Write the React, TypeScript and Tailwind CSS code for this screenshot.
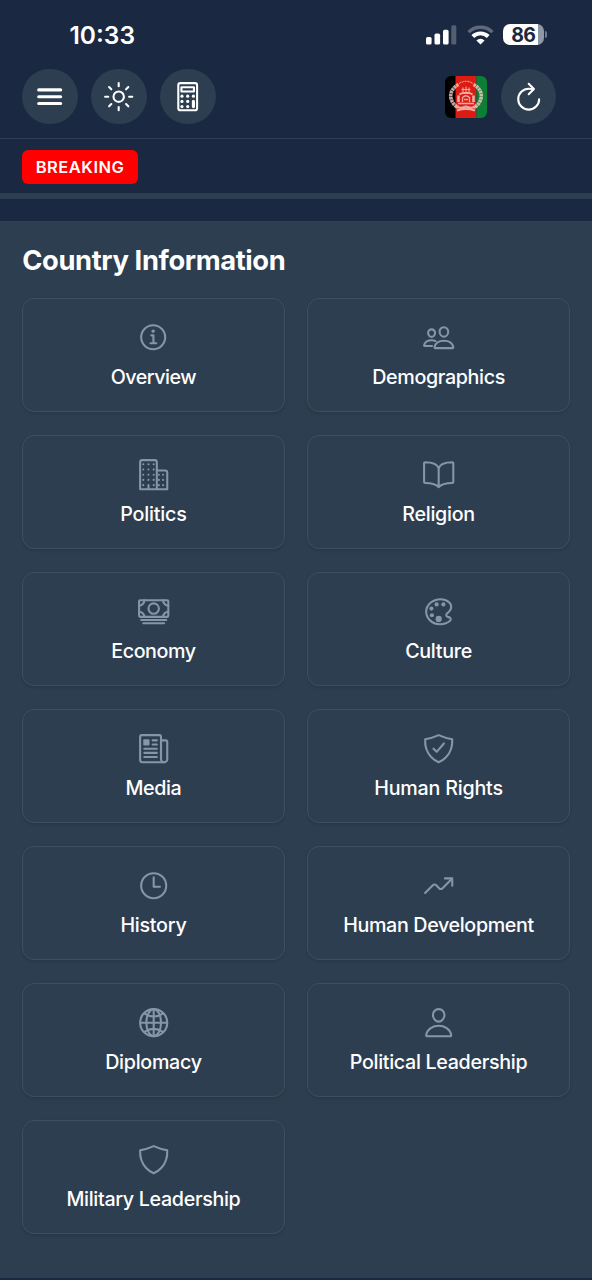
import type { ReactNode } from "react";
import type { IconType } from "react-icons";
import {
  IoBookOutline,
  IoBusinessOutline,
  IoCalculatorOutline,
  IoCashOutline,
  IoColorPaletteOutline,
  IoGlobeOutline,
  IoInformationCircleOutline,
  IoMenu,
  IoNewspaperOutline,
  IoPeopleOutline,
  IoPersonOutline,
  IoRefreshOutline,
  IoShieldCheckmarkOutline,
  IoShieldOutline,
  IoSunnyOutline,
  IoTimeOutline,
  IoTrendingUpOutline,
} from "react-icons/io5";

type Section = { label: string; icon: IconType; tracking: string };

const SECTIONS: Section[] = [
  { label: "Overview", icon: IoInformationCircleOutline, tracking: "tracking-[-0.5px]" },
  { label: "Demographics", icon: IoPeopleOutline, tracking: "tracking-[-0.36px]" },
  { label: "Politics", icon: IoBusinessOutline, tracking: "tracking-[-0.2px]" },
  { label: "Religion", icon: IoBookOutline, tracking: "tracking-[-0.28px]" },
  { label: "Economy", icon: IoCashOutline, tracking: "tracking-[-0.45px]" },
  { label: "Culture", icon: IoColorPaletteOutline, tracking: "tracking-[-0.3px]" },
  { label: "Media", icon: IoNewspaperOutline, tracking: "tracking-[-0.4px]" },
  { label: "Human Rights", icon: IoShieldCheckmarkOutline, tracking: "tracking-[-0.22px]" },
  { label: "History", icon: IoTimeOutline, tracking: "tracking-[-0.25px]" },
  { label: "Human Development", icon: IoTrendingUpOutline, tracking: "tracking-[-0.36px]" },
  { label: "Diplomacy", icon: IoGlobeOutline, tracking: "tracking-[-0.3px]" },
  { label: "Political Leadership", icon: IoPersonOutline, tracking: "tracking-[-0.32px]" },
  { label: "Military Leadership", icon: IoShieldOutline, tracking: "tracking-[-0.33px]" },
];

function StatusBar() {
  return (
    <div className="flex h-[69px] items-center justify-between pr-[45px] pl-[69.5px]">
      <span className="pt-px text-[24.5px] leading-none font-semibold">10:33</span>
      <div className="flex items-center">
        <svg width="31" height="20" viewBox="0 0 31 20" fill="white">
          <rect x="0" y="12" width="5.6" height="7.6" rx="1.6" />
          <rect x="8.5" y="8.6" width="5.6" height="11" rx="1.6" />
          <rect x="17" y="4.8" width="5.6" height="14.8" rx="1.6" />
          <rect x="25.3" y="0.3" width="5" height="19.3" rx="1.6" opacity="0.25" />
        </svg>
        <svg
          className="ml-[9.5px]"
          width="27"
          height="20"
          viewBox="0 0 27 20"
          fill="none"
          stroke="white"
        >
          <path d="M1.6 7.1a17 17 0 0 1 23.8 0" strokeWidth="3.4" opacity="0.3" />
          <path d="M5.8 11.5a11 11 0 0 1 15.4 0" strokeWidth="3.9" />
          <path d="M13.5 19.6l-4.1-4.2a5.9 5.9 0 0 1 8.2 0z" fill="white" stroke="none" />
        </svg>
        <div className="ml-[9.5px] flex h-[21px] w-[40.5px] items-center justify-center rounded-[7px] bg-[linear-gradient(90deg,#fff_86%,#8f98a5_86%)] pt-[1.5px] text-[19.5px] leading-none font-bold tracking-[-0.7px] text-[#1a2940]">
          86
        </div>
        <span className="ml-px h-[7px] w-[2.5px] rounded-r-full bg-[#717b8b]" />
      </div>
    </div>
  );
}

function RoundButton({ children, label }: { children: ReactNode; label: string }) {
  return (
    <button
      type="button"
      aria-label={label}
      className="flex size-[55.4px] items-center justify-center rounded-full bg-[#2d3e50]"
    >
      {children}
    </button>
  );
}

function AfghanistanFlag() {
  return (
    <svg className="size-[42px] rounded-[6px]" viewBox="0 0 42 42">
      <rect width="10.6" height="42" fill="#000" />
      <rect x="10.6" width="20.8" height="42" fill="#dc1c13" />
      <rect x="31.4" width="10.6" height="42" fill="#0d7f36" />
      <g fill="none" stroke="#f3cfc8" opacity="0.8">
        <path d="M13.5 8.5C3.5 13.5 3 25.5 13 31.5" strokeWidth="3.6" strokeDasharray="2.6 0.5" />
        <path d="M28.5 8.5C38.5 13.5 39 25.5 29 31.5" strokeWidth="3.6" strokeDasharray="2.6 0.5" />
        <path d="M14 7.5q7-4.5 14 0" strokeWidth="1.2" strokeDasharray="1 0.6" />
        <path d="M11 30.5q5 2.5 10 0q5 2.5 10 0M12 34.5q9-3 18 0" strokeWidth="2" />
        <path d="M13 27.5h16" strokeWidth="1.6" />
        <path d="M13.5 26v-6.5M28.5 26v-6.5" strokeWidth="2.6" />
        <path d="M14.5 18.5q2-1.5 4-1.5h5q2 0 4 1.5" strokeWidth="1.8" />
        <path d="M17.5 26v-4.5q3.5-3.5 7 0v4.5M19 23.5h4" strokeWidth="1.3" />
        <path d="M16.5 13.5h9M18 16.5v-5M21 16.5v-6M24 16.5v-5" strokeWidth="1.1" />
      </g>
    </svg>
  );
}

function TopBar() {
  return (
    <header className="flex h-[70px] items-start justify-between border-b border-[#2d3e50] pr-[36px] pl-[22.3px]">
      <div className="flex gap-[13.7px]">
        <RoundButton label="Menu">
          <IoMenu className="size-[33.4px]" />
        </RoundButton>
        <RoundButton label="Toggle theme">
          <IoSunnyOutline className="size-[33.4px]" />
        </RoundButton>
        <RoundButton label="Calculator">
          <IoCalculatorOutline className="size-[33.4px]" />
        </RoundButton>
      </div>
      <div className="flex items-center gap-[13.7px]">
        <AfghanistanFlag />
        <RoundButton label="Refresh">
          <IoRefreshOutline className="size-[33.4px]" />
        </RoundButton>
      </div>
    </header>
  );
}

function BreakingBar() {
  return (
    <div className="flex h-[60px] items-start border-b-[6px] border-[#2d3e50] pt-[11px] pl-[22px]">
      <span className="flex h-[34px] w-[116px] items-center justify-center rounded-[6px] bg-[#ff0000] pt-px text-[16.5px] leading-none font-semibold tracking-[0.5px]">
        BREAKING
      </span>
    </div>
  );
}

function SectionCard({ label, icon: Icon, tracking }: Section) {
  return (
    <button
      type="button"
      className="flex h-[114.1px] flex-col items-center rounded-[12px] border-[1.5px] border-[#3f4f61] bg-[#2d3e50] pt-[22px] shadow-[0_1.5px_3px_rgba(0,0,0,0.1)]"
    >
      <Icon className="size-[33.4px] shrink-0 text-[#8496a9]" />
      <span className={`mt-[10.6px] text-[19.7px] leading-[24px] font-medium whitespace-nowrap ${tracking}`}>
        {label}
      </span>
    </button>
  );
}

export default function App() {
  return (
    <div className="flex h-[1280px] w-[592px] flex-col overflow-hidden bg-[#1a2941] font-['Inter',sans-serif] text-white antialiased">
      <StatusBar />
      <TopBar />
      <BreakingBar />
      <main className="mt-[22px] h-[1057px] bg-[#2d3e50] px-[22.3px] pt-[23px]">
        <h1 className="text-[27.3px] leading-[34px] font-bold tracking-[-0.38px]">
          Country Information
        </h1>
        <div className="mt-[20.3px] grid grid-cols-2 gap-[22.8px]">
          {SECTIONS.map((section) => (
            <SectionCard key={section.label} {...section} />
          ))}
        </div>
      </main>
    </div>
  );
}
